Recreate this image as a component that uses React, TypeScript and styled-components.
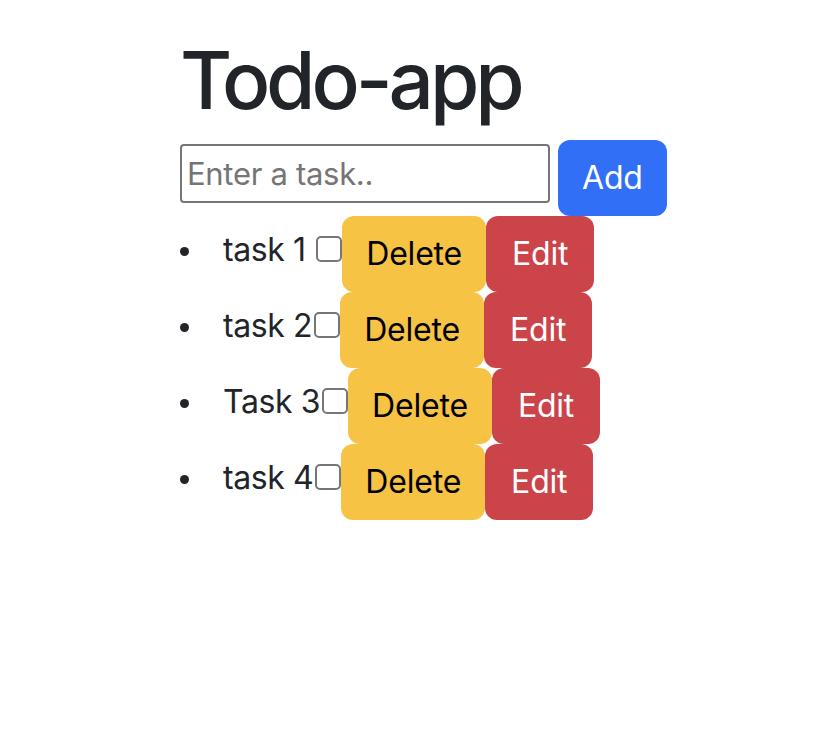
import React from "react";
import styled, { createGlobalStyle } from "styled-components";

const GlobalStyle = createGlobalStyle`
  html, body { margin: 0; padding: 0; background: #ffffff; }
  body {
    font-family: Inter, "Noto Sans", "Liberation Sans", sans-serif;
    color: #212529;
  }
  * { box-sizing: border-box; }
`;

const Page = styled.main`
  padding: 32px 0 0 180px;
`;

const Title = styled.h1`
  margin: 0 0 12px 0;
  font-size: 80px;
  line-height: 96px;
  font-weight: 500;
  letter-spacing: -4.1px;
  color: #212529;
`;

const Form = styled.form`
  display: flex;
  align-items: flex-start;
  gap: 8px;
`;

const TaskInput = styled.input`
  margin-top: 4px;
  width: 370px;
  height: 59px;
  padding: 2px 5px;
  border: 2px solid #767676;
  border-radius: 4px;
  font-family: inherit;
  font-size: 31px;
  letter-spacing: -0.3px;
  color: #212529;
  background: #fff;
  outline: none;
  &::placeholder { color: #757575; }
`;

const Button = styled.button<{ $tone: "primary" | "warning" | "danger" }>`
  height: 76px;
  padding: 0 ${(p) => (p.$tone === "danger" ? 26 : 24)}px;
  border: none;
  border-radius: 12px;
  font-family: inherit;
  font-size: 32px;
  line-height: 48px;
  font-weight: 400;
  letter-spacing: -0.2px;
  cursor: pointer;
  background: ${(p) =>
    p.$tone === "primary" ? "#316ff6" : p.$tone === "warning" ? "#f6c344" : "#cb444a"};
  color: ${(p) => (p.$tone === "warning" ? "#000000" : "#ffffff")};
`;

const List = styled.ul`
  margin: 0;
  padding: 0;
  list-style: none;
`;

const Item = styled.li`
  display: flex;
  align-items: flex-start;
  height: 76px;
  &::before {
    content: "";
    width: 9px;
    height: 9px;
    margin: 31px 34px 0 0;
    border-radius: 50%;
    background: #212529;
    flex: none;
  }
`;

const TaskText = styled.span`
  margin-top: 10px;
  font-size: 32px;
  line-height: 48px;
  letter-spacing: -0.4px;
  white-space: pre;
  color: #212529;
`;

const Check = styled.input`
  appearance: none;
  width: 26px;
  height: 26px;
  margin: 20px 0 0 2px;
  border: 2px solid #767676;
  border-radius: 5px;
  background: #fff;
  flex: none;
`;

const tasks = ["task 1 ", "task 2", "Task 3", "task 4"];

export default function App() {
  return (
    <>
      <GlobalStyle />
      <Page>
        <Title>Todo-app</Title>
        <Form onSubmit={(e) => e.preventDefault()}>
          <TaskInput placeholder="Enter a task.." />
          <Button $tone="primary" type="submit">Add</Button>
        </Form>
        <List>
          {tasks.map((t) => (
            <Item key={t}>
              <TaskText>{t}</TaskText>
              <Check type="checkbox" />
              <Button $tone="warning">Delete</Button>
              <Button $tone="danger">Edit</Button>
            </Item>
          ))}
        </List>
      </Page>
    </>
  );
}
